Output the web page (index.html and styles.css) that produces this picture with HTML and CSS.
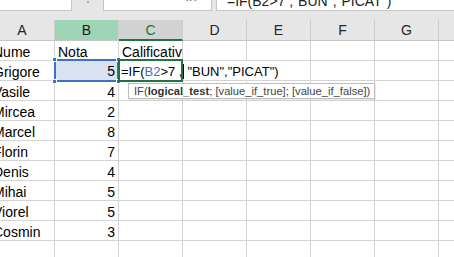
FILE: index.html
```html
<!DOCTYPE html>
<html lang="ro">
<head>
    <meta charset="UTF-8">
    <meta name="viewport" content="width=device-width, initial-scale=1.0">
    <title>Foaie de calcul</title>
    <link rel="stylesheet" href="styles.css">
</head>
<body>
    <div class="topbar">
        <div class="name-box"></div>
        <div class="grip"><span class="dot"></span></div>
        <div class="fx-buttons">
            <span class="btn">✕</span>
            <span class="btn">✓</span>
            <span class="btn fx">fx</span>
        </div>
        <div class="formula-input"><span class="formula-text">=IF(B2&gt;7 ,"BUN","PICAT")</span></div>
    </div>

    <div class="sheet">
        <div class="row head">
            <div class="cell">A</div>
            <div class="cell sel">B</div>
            <div class="cell active">C</div>
            <div class="cell">D</div>
            <div class="cell">E</div>
            <div class="cell">F</div>
            <div class="cell">G</div>
            <div class="cell"></div>
        </div>
        <div class="row">
            <div class="cell">Nume</div>
            <div class="cell">Nota</div>
            <div class="cell">Calificativ</div>
            <div class="cell"></div><div class="cell"></div><div class="cell"></div><div class="cell"></div><div class="cell"></div>
        </div>
        <div class="row">
            <div class="cell">Grigore</div>
            <div class="cell num">5</div>
            <div class="cell"></div>
            <div class="cell"></div><div class="cell"></div><div class="cell"></div><div class="cell"></div><div class="cell"></div>
        </div>
        <div class="row">
            <div class="cell">Vasile</div>
            <div class="cell num">4</div>
            <div class="cell"></div>
            <div class="cell"></div><div class="cell"></div><div class="cell"></div><div class="cell"></div><div class="cell"></div>
        </div>
        <div class="row">
            <div class="cell">Mircea</div>
            <div class="cell num">2</div>
            <div class="cell"></div>
            <div class="cell"></div><div class="cell"></div><div class="cell"></div><div class="cell"></div><div class="cell"></div>
        </div>
        <div class="row">
            <div class="cell">Marcel</div>
            <div class="cell num">8</div>
            <div class="cell"></div>
            <div class="cell"></div><div class="cell"></div><div class="cell"></div><div class="cell"></div><div class="cell"></div>
        </div>
        <div class="row">
            <div class="cell">Florin</div>
            <div class="cell num">7</div>
            <div class="cell"></div>
            <div class="cell"></div><div class="cell"></div><div class="cell"></div><div class="cell"></div><div class="cell"></div>
        </div>
        <div class="row">
            <div class="cell">Denis</div>
            <div class="cell num">4</div>
            <div class="cell"></div>
            <div class="cell"></div><div class="cell"></div><div class="cell"></div><div class="cell"></div><div class="cell"></div>
        </div>
        <div class="row">
            <div class="cell">Mihai</div>
            <div class="cell num">5</div>
            <div class="cell"></div>
            <div class="cell"></div><div class="cell"></div><div class="cell"></div><div class="cell"></div><div class="cell"></div>
        </div>
        <div class="row">
            <div class="cell">Viorel</div>
            <div class="cell num">5</div>
            <div class="cell"></div>
            <div class="cell"></div><div class="cell"></div><div class="cell"></div><div class="cell"></div><div class="cell"></div>
        </div>
        <div class="row">
            <div class="cell">Cosmin</div>
            <div class="cell num">3</div>
            <div class="cell"></div>
            <div class="cell"></div><div class="cell"></div><div class="cell"></div><div class="cell"></div><div class="cell"></div>
        </div>
        <div class="row">
            <div class="cell"></div><div class="cell"></div><div class="cell"></div><div class="cell"></div>
            <div class="cell"></div><div class="cell"></div><div class="cell"></div><div class="cell"></div>
        </div>

        <!-- B2 reference highlight -->
        <div class="ref-box">
            <span class="num-val">5</span>
            <i class="handle tl"></i><i class="handle tr"></i>
            <i class="handle bl"></i><i class="handle br"></i>
        </div>

        <!-- C2 in edit mode -->
        <div class="edit-text">=IF(<span class="ref">B2</span>&gt;7 ,<span class="caret"></span>"BUN","PICAT")</div>
        <div class="active-cell"></div>

        <div class="tooltip">IF(<b>logical_test</b>; [value_if_true]; [value_if_false])</div>
    </div>
</body>
</html>
```

FILE: styles.css
```css
* {
    margin: 0;
    padding: 0;
    box-sizing: border-box;
}

html, body {
    overflow: hidden;
}

body {
    font-family: 'Liberation Sans', Arial, sans-serif;
    background: #ffffff;
    width: 454px;
    height: 257px;
    color: #000;
}

/* formula bar, mostly scrolled out of view */
.topbar {
    height: 20px;
    background: #e6e6e6;
    display: flex;
    align-items: flex-start;
}

.name-box,
.fx-buttons,
.formula-input {
    height: 11px;
    background: #fff;
    border: 1px solid #c6c6c6;
    border-top: none;
    overflow: hidden;
}

.name-box {
    width: 72px;
    border-left: none;
}

.grip {
    width: 31px;
    height: 11px;
    position: relative;
}

.grip .dot {
    position: absolute;
    left: 15px;
    top: 1px;
    width: 2px;
    height: 2px;
    background: #a6a6a6;
}

.fx-buttons {
    width: 109px;
    display: flex;
    font-size: 15px;
    color: #6e6e6e;
    line-height: 14px;
}

.fx-buttons .btn {
    margin-top: -11px;
    margin-left: 19px;
}

.fx-buttons .btn:first-child {
    margin-left: 13px;
}

.fx-buttons .fx {
    font-style: italic;
    margin-left: 24px;
    font-size: 14px;
}

.formula-input {
    flex: 1;
    margin-left: 4px;
    border-right: none;
    padding-left: 10px;
}

.formula-text {
    display: block;
    margin-top: -6px;
    font-size: 14px;
    line-height: 14px;
    color: #222;
    white-space: nowrap;
}

/* grid */
.sheet {
    margin-left: -10px;
    position: relative;
}

.row {
    display: grid;
    grid-template-columns: 65px repeat(7, 64px);
    height: 20px;
}

.cell {
    border-right: 1px solid #d4d4d4;
    border-bottom: 1px solid #d4d4d4;
    font-size: 14px;
    line-height: 17px;
    padding: 3px 3px 0 3px;
    white-space: nowrap;
    overflow: hidden;
}

.cell.num {
    text-align: right;
}

.row.head {
    height: 21px;
    background: #e6e6e6;
}

.head .cell {
    text-align: center;
    color: #262626;
    line-height: 20px;
    padding: 0;
    border-right-color: #cdcdcd;
    border-bottom-color: #c6c6c6;
}

.head .cell.sel {
    background: #9fd5b7;
    color: #1b1b1b;
}

.head .cell.active {
    background: #d2d2d2;
    color: #217346;
    border-bottom: 2px solid #217346;
}

/* overlays */
.ref-box {
    position: absolute;
    left: 64px;
    top: 39px;
    width: 65px;
    height: 23px;
    border: 2px solid #3f6fc6;
    background: #d9e2f3;
    font-size: 14px;
    line-height: 17px;
    padding-top: 2px;
    text-align: right;
    padding-right: 2px;
}

.handle {
    position: absolute;
    width: 5px;
    height: 5px;
    background: #3f6fc6;
    border: 1px solid #fff;
}

.handle.tl { left: -4px; top: -4px; }
.handle.tr { right: -4px; top: -4px; }
.handle.bl { left: -4px; bottom: -4px; }
.handle.br { right: -4px; bottom: -4px; }

.edit-text {
    position: absolute;
    left: 130px;
    top: 41px;
    height: 19px;
    padding: 2px 4px 0 1px;
    background: #fff;
    font-size: 13px;
    line-height: 17px;
    white-space: nowrap;
}

.edit-text .ref {
    color: #3f6fc6;
}

.caret {
    display: inline-block;
    width: 1px;
    height: 15px;
    background: #000;
    vertical-align: -3px;
    margin: 0 3px 0 1px;
}

.active-cell {
    position: absolute;
    left: 128px;
    top: 39px;
    width: 65px;
    height: 23px;
    border: 2px solid #217346;
}

.tooltip {
    position: absolute;
    left: 138px;
    top: 63px;
    height: 16px;
    padding: 0 4px 0 5px;
    background: #fff;
    border: 1px solid #bdbdbd;
    box-shadow: 1px 1px 1px rgba(0, 0, 0, 0.08);
    font-size: 11.2px;
    line-height: 14px;
    color: #444;
    white-space: nowrap;
}

.tooltip b {
    color: #333;
}
```
